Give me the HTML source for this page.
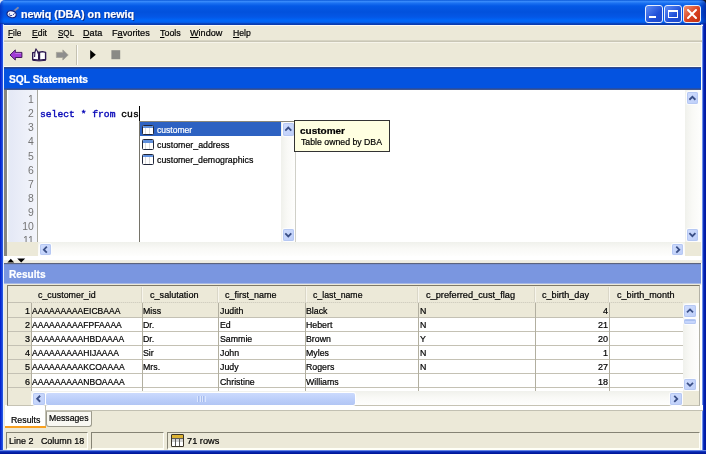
<!DOCTYPE html>
<html>
<head>
<meta charset="utf-8">
<title>newiq (DBA) on newiq</title>
<style>
html,body{margin:0;padding:0;}
body{width:706px;height:454px;overflow:hidden;background:#0a46d8;font-family:"Liberation Sans","DejaVu Sans",sans-serif;font-size:9.5px;color:#000;-webkit-text-stroke:0.22px currentColor;}
div,span{position:absolute;box-sizing:border-box;white-space:nowrap;}
span span{position:static;}
svg{position:absolute;overflow:visible;}
u{text-decoration:underline;}
#win{will-change:transform;left:0;top:0;width:706px;height:454px;overflow:hidden;background:#001aa2;}
#title{left:0;top:0;width:706px;height:24.6px;border-radius:5px 5px 0 0;background:linear-gradient(to bottom,#0a58d8 0,#3a8cfc 1.6px,#1c72f2 3px,#0459e6 6px,#0251dc 12px,#0457e6 17px,#0066f8 20.5px,#0461f0 22.3px,#0a40b6 23.7px,#0a3cb0 24.6px);}
.cb{top:5px;width:18px;height:18px;border:1px solid #e8effd;border-radius:3px;}
#client{left:3.2px;top:24.5px;width:699.2px;height:425.6px;background:#ece9d8;border-left:1px solid #e6eefc;border-right:1.2px solid #fafbf8;}
.hdr{left:4.3px;width:696.9px;}
.sbt{background:linear-gradient(to bottom,#f0f1ec,#f9f9f6 45%,#fefefd);}
.sbv{background:linear-gradient(to right,#f0f1ec,#f9f9f6 45%,#fefefd);}
.btn{background:linear-gradient(135deg,#d0ddfd,#bdcef9);border-radius:2px;box-shadow:0 0 0 1px #fdfdfd,inset 0 0 0 1px #b6c8f3;}
</style>
</head>
<body>
<div id="win">
<div style="left:0;top:0;width:5px;height:5px;background:#dfe8fa"></div><div style="left:701px;top:0;width:5px;height:5px;background:#10142a"></div>
<div id="title"></div>
<div style="left:0;top:0;width:706px;height:24.6px;border-radius:5px 5px 0 0;background:linear-gradient(to right,rgba(0,20,160,.45) 0,rgba(0,20,160,0) 4px,rgba(0,20,160,0) 699px,rgba(0,10,120,.55) 706px)"></div>
<span style="left:20.60px;top:9px;font-size:10px;line-height:11px;height:11px;transform:scaleX(1.0706);transform-origin:0 0;font-weight:bold;color:#fff;text-shadow:1px 1px 0 #10308a;">newiq (DBA) on newiq</span>
<svg style="left:0;top:0" width="30" height="25" viewBox="0 0 30 25"><path d="M13.4 11.8 L18 7.8" stroke="#8088aa" stroke-width="1.8" stroke-linecap="round"/><path d="M11.8 13.6 L14.6 11" stroke="#1c2a7a" stroke-width="1.7"/><ellipse cx="11.6" cy="14.2" rx="4.7" ry="3.4" transform="rotate(14 11.6 14.2)" fill="#f2f4ff" stroke="#14227a" stroke-width="1.2"/><path d="M9.6 13.4 a1.4 1.4 0 1 0 2.4 1.8 M12.8 15 l1.8 -1.6" fill="none" stroke="#2a3a96" stroke-width="1"/></svg>
<div class="cb" style="left:645px;background:linear-gradient(135deg,#5f8df5,#2050d8 60%,#1c48c8)"><div style="left:3px;top:9.8px;width:7px;height:2.4px;background:#fff"></div></div>
<div class="cb" style="left:664px;background:linear-gradient(135deg,#5f8df5,#2050d8 60%,#1c48c8)"><div style="left:3.3px;top:4px;width:9.6px;height:7.6px;border:1px solid #fff;border-top-width:2.4px"></div></div>
<div class="cb" style="left:683px;background:linear-gradient(135deg,#f09070,#d84020 55%,#c03010)"><svg style="left:3px;top:3px" width="10" height="10" viewBox="0 0 10 10"><path d="M1 1 L9 9 M9 1 L1 9" stroke="#fff" stroke-width="2" stroke-linecap="round"/></svg></div>
<div style="left:0;top:24px;width:4px;height:430px;background:linear-gradient(to right,#0019cc 0,#0a2cd2 0.9px,#2454e0 2.5px,#8fb2f6 3.1px,#8fb2f6 4px)"></div>
<div style="left:701px;top:24px;width:5px;height:430px;background:linear-gradient(to right,#7e9cf0 1.4px,#1a40c8 2.1px,#0a2cb8 2.8px,#001aa4 3.8px)"></div>
<div style="left:0;top:449.6px;width:706px;height:4.4px;background:linear-gradient(to bottom,#7e9cf0 0.3px,#1a40c8 1.1px,#0a2cb4 1.9px,#00189c 3.1px)"></div>
<div id="client"></div>
<div style="left:3.5px;top:24.6px;width:699.3px;height:1.2px;background:#fbfaf6"></div>
<span style="left:7.60px;top:27px;font-size:9.5px;line-height:11px;height:11px;transform:scaleX(0.8688);transform-origin:0 0;"><u>F</u>ile</span>
<span style="left:31.70px;top:27px;font-size:9.5px;line-height:11px;height:11px;transform:scaleX(0.9163);transform-origin:0 0;"><u>E</u>dit</span>
<span style="left:57.50px;top:27px;font-size:9.5px;line-height:11px;height:11px;transform:scaleX(0.8469);transform-origin:0 0;"><u>S</u>QL</span>
<span style="left:83.30px;top:27px;font-size:9.5px;line-height:11px;height:11px;transform:scaleX(0.9568);transform-origin:0 0;"><u>D</u>ata</span>
<span style="left:112.00px;top:27px;font-size:9.5px;line-height:11px;height:11px;transform:scaleX(0.9675);transform-origin:0 0;">F<u>a</u>vorites</span>
<span style="left:159.50px;top:27px;font-size:9.5px;line-height:11px;height:11px;transform:scaleX(0.9379);transform-origin:0 0;"><u>T</u>ools</span>
<span style="left:190.20px;top:27px;font-size:9.5px;line-height:11px;height:11px;transform:scaleX(0.9559);transform-origin:0 0;"><u>W</u>indow</span>
<span style="left:232.50px;top:27px;font-size:9.5px;line-height:11px;height:11px;transform:scaleX(0.9110);transform-origin:0 0;"><u>H</u>elp</span>
<div style="left:4px;top:40px;width:698px;height:1px;background:#d6d3c2"></div>
<div style="left:4px;top:41px;width:698px;height:1px;background:#c9c6b6"></div>
<div style="left:4px;top:42px;width:698px;height:1px;background:#f6f4ea"></div>
<svg style="left:0;top:0" width="706" height="454" viewBox="0 0 706 454"><path d="M10 55 L15.3 49.9 L15.3 52.4 L21.9 52.4 L21.9 57.5 L15.3 57.5 L15.3 60 Z" fill="#a23cd6" stroke="#431a5e" stroke-width="1" stroke-linejoin="round"/><path d="M15.3 53.4 L21 53.4" stroke="#c27ae8" stroke-width="1"/><path d="M32.7 52.6 L32.7 59.4 L38.7 60.1 L38.7 52.2 Z M39.5 52.2 L39.5 60.1 L45.6 59.4 L45.6 52.4 L42.5 51.6 Z" fill="#fff" stroke="#2c1850" stroke-width="1.4" stroke-linejoin="round"/><path d="M34.6 57 L34.9 52.5 L35.9 48.9 L37.3 51 L38.4 54" fill="#fff" stroke="#2c1850" stroke-width="1.1" stroke-linejoin="round"/><path d="M32.4 60.3 L38.7 60.9 L39.5 60.9 L45.9 60.3" fill="none" stroke="#2c1850" stroke-width="1"/><path d="M68.2 55 L62.9 49.9 L62.9 52.4 L56.4 52.4 L56.4 57.5 L62.9 57.5 L62.9 60 Z" fill="#8e8e8e" stroke="#a9a79c" stroke-width="1" stroke-linejoin="round"/><path d="M90.2 50 L95.8 54.7 L90.2 59.4 Z" fill="#000"/><rect x="111.4" y="50.2" width="8.8" height="9" fill="#8a8a86"/></svg>
<div style="left:76.2px;top:45px;width:1px;height:20px;background:#c5c2b2"></div><div style="left:77.2px;top:45px;width:1px;height:20px;background:#fdfcf8"></div>
<div style="left:4px;top:65.9px;width:698px;height:1.3px;background:#fcfbf4"></div>
<div class="hdr" style="top:67.1px;height:22.9px;background:linear-gradient(to bottom,#3a508a 0,#1e3f94 1.2px,#0453e0 2px,#0453e0 21px,#2c4c9c 21.7px,#4c5e8c 22.9px)"></div>
<span style="left:8.80px;top:73px;font-size:10.5px;line-height:12px;height:12px;transform:scaleX(0.9763);transform-origin:0 0;font-weight:bold;color:#fff;">SQL Statements</span>
<div style="left:4.2px;top:90px;width:697.2px;height:166.4px;background:#86867e"></div>
<div style="left:6.8px;top:90.3px;width:694.6px;height:165.9px;background:#ece9d8"></div>
<div style="left:6.8px;top:90.3px;width:694.6px;height:151.9px;background:#fff"></div>
<div style="left:6.8px;top:90.3px;width:30.2px;height:151.9px;background:linear-gradient(to right,#fff 0,#fff 0.8px,#e6ecf4 1.6px,#e5e9f6 4px,#f3f5fb 100%)"></div><div style="left:37px;top:90px;width:1px;height:152px;background:#a8a8a0"></div>
<div style="left:5px;top:90px;width:696px;height:152px;overflow:hidden">
<span style="left:22.92px;top:4px;font-size:10.4px;line-height:11px;height:11px;transform:scaleX(1.0000);transform-origin:0 0;color:#747474;-webkit-text-stroke:0;">1</span>
<span style="left:22.92px;top:18px;font-size:10.4px;line-height:11px;height:11px;transform:scaleX(1.0000);transform-origin:0 0;color:#747474;-webkit-text-stroke:0;">2</span>
<span style="left:22.92px;top:32px;font-size:10.4px;line-height:11px;height:11px;transform:scaleX(1.0000);transform-origin:0 0;color:#747474;-webkit-text-stroke:0;">3</span>
<span style="left:22.92px;top:46px;font-size:10.4px;line-height:11px;height:11px;transform:scaleX(1.0000);transform-origin:0 0;color:#747474;-webkit-text-stroke:0;">4</span>
<span style="left:22.92px;top:61px;font-size:10.4px;line-height:11px;height:11px;transform:scaleX(1.0000);transform-origin:0 0;color:#747474;-webkit-text-stroke:0;">5</span>
<span style="left:22.92px;top:75px;font-size:10.4px;line-height:11px;height:11px;transform:scaleX(1.0000);transform-origin:0 0;color:#747474;-webkit-text-stroke:0;">6</span>
<span style="left:22.92px;top:89px;font-size:10.4px;line-height:11px;height:11px;transform:scaleX(1.0000);transform-origin:0 0;color:#747474;-webkit-text-stroke:0;">7</span>
<span style="left:22.92px;top:103px;font-size:10.4px;line-height:11px;height:11px;transform:scaleX(1.0000);transform-origin:0 0;color:#747474;-webkit-text-stroke:0;">8</span>
<span style="left:22.92px;top:117px;font-size:10.4px;line-height:11px;height:11px;transform:scaleX(1.0000);transform-origin:0 0;color:#747474;-webkit-text-stroke:0;">9</span>
<span style="left:17.13px;top:131px;font-size:10.4px;line-height:11px;height:11px;transform:scaleX(1.0000);transform-origin:0 0;color:#747474;-webkit-text-stroke:0;">10</span>
<span style="left:17.90px;top:145px;font-size:10.4px;line-height:11px;height:11px;transform:scaleX(1.0000);transform-origin:0 0;color:#747474;-webkit-text-stroke:0;">11</span>
</div>
<span style="left:39.80px;top:109px;font-size:9.67px;line-height:11px;height:11px;transform:scaleX(1.0016);transform-origin:0 0;color:#0808b8;font-family:'Liberation Mono','DejaVu Sans Mono',monospace;-webkit-text-stroke:0.4px currentColor;">select * from <span style="color:#000">cus</span></span>
<div style="left:139px;top:106px;width:1px;height:15px;background:#000"></div>
<div class="sbv" style="left:685.3px;top:90.3px;width:16.1px;height:151.9px"></div>
<div class="btn" style="left:687px;top:92.3px;width:10.8px;height:11.9px"></div>
<svg style="left:0;top:0" width="1" height="1"><path d="M689.4 99.75 L692.4 96.75 L695.4 99.75" fill="none" stroke="#3a4f86" stroke-width="1.8"/></svg>
<div class="btn" style="left:687px;top:228.6px;width:10.8px;height:12.2px"></div>
<svg style="left:0;top:0" width="1" height="1"><path d="M689.4 233.2 L692.4 236.2 L695.4 233.2" fill="none" stroke="#3a4f86" stroke-width="1.8"/></svg>
<div style="left:139px;top:120.6px;width:156.5px;height:121.6px;background:#fff;border-left:1.4px solid #76746a;border-top:1px solid #8a887a;border-right:1px solid #d0d0c8"></div>
<div style="left:140.3px;top:121.5px;width:141px;height:14.8px;background:#2d62c2"></div>
<div style="left:141.8px;top:124.7px;width:12px;height:10.6px;background:#fff;border:1.2px solid #20263a;border-radius:1.5px;overflow:hidden"><div style="left:0;top:0;width:10px;height:2.2px;background:#5f8fdc"></div><div style="left:2.7px;top:2.2px;width:1px;height:7px;background:#dcdcdc"></div><div style="left:5.9px;top:2.2px;width:1px;height:7px;background:#dcdcdc"></div></div>
<span style="left:157.20px;top:124px;font-size:9.5px;line-height:11px;height:11px;transform:scaleX(0.9010);transform-origin:0 0;color:#fff;">customer</span>
<div style="left:141.8px;top:139.4px;width:12px;height:10.6px;background:#fff;border:1.2px solid #20263a;border-radius:1.5px;overflow:hidden"><div style="left:0;top:0;width:10px;height:2.2px;background:#5f8fdc"></div><div style="left:2.7px;top:2.2px;width:1px;height:7px;background:#dcdcdc"></div><div style="left:5.9px;top:2.2px;width:1px;height:7px;background:#dcdcdc"></div></div>
<span style="left:157.20px;top:139px;font-size:9.5px;line-height:11px;height:11px;transform:scaleX(0.9277);transform-origin:0 0;color:#000;">customer_address</span>
<div style="left:141.8px;top:154.2px;width:12px;height:10.6px;background:#fff;border:1.2px solid #20263a;border-radius:1.5px;overflow:hidden"><div style="left:0;top:0;width:10px;height:2.2px;background:#5f8fdc"></div><div style="left:2.7px;top:2.2px;width:1px;height:7px;background:#dcdcdc"></div><div style="left:5.9px;top:2.2px;width:1px;height:7px;background:#dcdcdc"></div></div>
<span style="left:157.20px;top:154px;font-size:9.5px;line-height:11px;height:11px;transform:scaleX(0.9257);transform-origin:0 0;color:#000;">customer_demographics</span>
<div class="sbv" style="left:281.3px;top:121.6px;width:13.4px;height:120.6px"></div>
<div class="btn" style="left:282.6px;top:122.6px;width:11.4px;height:13px"></div>
<svg style="left:0;top:0" width="1" height="1"><path d="M285.3 130.6 L288.3 127.6 L291.3 130.6" fill="none" stroke="#3a4f86" stroke-width="1.8"/></svg>
<div class="btn" style="left:282.6px;top:228.6px;width:11.4px;height:12.6px"></div>
<svg style="left:0;top:0" width="1" height="1"><path d="M285.3 233.4 L288.3 236.4 L291.3 233.4" fill="none" stroke="#3a4f86" stroke-width="1.8"/></svg>
<div style="left:294px;top:120px;width:96px;height:32px;background:#ffffe1;border:1px solid #333"></div>
<span style="left:300.40px;top:125px;font-size:9.5px;line-height:11px;height:11px;transform:scaleX(1.0523);transform-origin:0 0;font-weight:bold;">customer</span>
<span style="left:300.60px;top:136px;font-size:9.5px;line-height:11px;height:11px;transform:scaleX(0.9184);transform-origin:0 0;">Table owned by DBA</span>
<div class="sbt" style="left:37.8px;top:242.2px;width:647.5px;height:14.2px"></div>
<div class="btn" style="left:39.6px;top:244.3px;width:11.5px;height:10.8px"></div>
<svg style="left:0;top:0" width="1" height="1"><path d="M46.85 246.70000000000002 L43.85 249.70000000000002 L46.85 252.70000000000002" fill="none" stroke="#3a4f86" stroke-width="1.8"/></svg>
<div class="btn" style="left:672.2px;top:244.2px;width:11.2px;height:11px"></div>
<svg style="left:0;top:0" width="1" height="1"><path d="M676.3000000000001 246.7 L679.3000000000001 249.7 L676.3000000000001 252.7" fill="none" stroke="#3a4f86" stroke-width="1.8"/></svg>
<div style="left:4.3px;top:256.4px;width:698.2px;height:6.4px;background:linear-gradient(to bottom,#fff 0,#fff 50%,#f0eee4 62%,#edeade 100%)"></div>
<svg style="left:7px;top:258px" width="20" height="5" viewBox="0 0 20 5"><path d="M0.4 4.4 L3.8 0.8 L7.2 4.4 Z M10.2 0.4 L18.2 0.4 L14.2 4.4 Z" fill="#000"/></svg>
<div class="hdr" style="top:262.6px;height:21.9px;background:linear-gradient(to bottom,#5a6078 0,#5e6682 1px,#7a96e0 1.6px,#7a96e0 20.2px,#e2e5ec 20.9px,#e6e7e6 21.9px)"></div>
<span style="left:8.60px;top:268px;font-size:10.5px;line-height:12px;height:12px;transform:scaleX(0.9623);transform-origin:0 0;font-weight:bold;color:#fff;">Results</span>
<div style="left:5px;top:405px;width:697.5px;height:6px;background:#fff;border-bottom:1px solid #c2c0b2"></div>
<div style="left:698px;top:285px;width:4.4px;height:126px;background:#fff;border-bottom:1px solid #c2c0b2"></div>
<div style="left:7px;top:284.8px;width:692.6px;height:121.2px;background:#ece9d8;border:1px solid;border-top-width:1.6px;border-color:#7d7868 #b2b1a6 #c6c3b4 #807d6e"></div>
<div style="left:31px;top:303px;width:652px;height:88px;background:#fff"></div>
<div style="left:31px;top:303px;width:652px;height:14.5px;background:#ece9d8"></div>
<span style="left:37.50px;top:289px;font-size:9.5px;line-height:11px;height:11px;transform:scaleX(0.9340);transform-origin:0 0;">c_customer_id</span>
<span style="left:149.70px;top:289px;font-size:9.5px;line-height:11px;height:11px;transform:scaleX(0.9566);transform-origin:0 0;">c_salutation</span>
<span style="left:225.40px;top:289px;font-size:9.5px;line-height:11px;height:11px;transform:scaleX(0.9469);transform-origin:0 0;">c_first_name</span>
<span style="left:313.00px;top:289px;font-size:9.5px;line-height:11px;height:11px;transform:scaleX(0.9190);transform-origin:0 0;">c_last_name</span>
<span style="left:425.60px;top:289px;font-size:9.5px;line-height:11px;height:11px;transform:scaleX(0.9685);transform-origin:0 0;">c_preferred_cust_flag</span>
<span style="left:541.70px;top:289px;font-size:9.5px;line-height:11px;height:11px;transform:scaleX(0.9569);transform-origin:0 0;">c_birth_day</span>
<span style="left:616.70px;top:289px;font-size:9.5px;line-height:11px;height:11px;transform:scaleX(0.9551);transform-origin:0 0;">c_birth_month</span>
<span style="left:24.78px;top:305px;font-size:9.5px;line-height:11px;height:11px;transform:scaleX(0.9500);transform-origin:0 0;">1</span>
<span style="left:32.20px;top:305px;font-size:9.5px;line-height:11px;height:11px;transform:scaleX(0.9000);transform-origin:0 0;">AAAAAAAAAEICBAAA</span>
<span style="left:142.90px;top:305px;font-size:9.5px;line-height:11px;height:11px;transform:scaleX(0.9250);transform-origin:0 0;">Miss</span>
<span style="left:220.10px;top:305px;font-size:9.5px;line-height:11px;height:11px;transform:scaleX(0.9250);transform-origin:0 0;">Judith</span>
<span style="left:306.30px;top:305px;font-size:9.5px;line-height:11px;height:11px;transform:scaleX(0.9250);transform-origin:0 0;">Black</span>
<span style="left:420.00px;top:305px;font-size:9.5px;line-height:11px;height:11px;transform:scaleX(0.9250);transform-origin:0 0;">N</span>
<span style="left:603.28px;top:305px;font-size:9.5px;line-height:11px;height:11px;transform:scaleX(0.9500);transform-origin:0 0;">4</span>
<span style="left:24.78px;top:319px;font-size:9.5px;line-height:11px;height:11px;transform:scaleX(0.9500);transform-origin:0 0;">2</span>
<span style="left:32.20px;top:319px;font-size:9.5px;line-height:11px;height:11px;transform:scaleX(0.9000);transform-origin:0 0;">AAAAAAAAAFPFAAAA</span>
<span style="left:142.90px;top:319px;font-size:9.5px;line-height:11px;height:11px;transform:scaleX(0.9250);transform-origin:0 0;">Dr.</span>
<span style="left:220.10px;top:319px;font-size:9.5px;line-height:11px;height:11px;transform:scaleX(0.9250);transform-origin:0 0;">Ed</span>
<span style="left:306.30px;top:319px;font-size:9.5px;line-height:11px;height:11px;transform:scaleX(0.9250);transform-origin:0 0;">Hebert</span>
<span style="left:420.00px;top:319px;font-size:9.5px;line-height:11px;height:11px;transform:scaleX(0.9250);transform-origin:0 0;">N</span>
<span style="left:598.26px;top:319px;font-size:9.5px;line-height:11px;height:11px;transform:scaleX(0.9500);transform-origin:0 0;">21</span>
<span style="left:24.78px;top:333px;font-size:9.5px;line-height:11px;height:11px;transform:scaleX(0.9500);transform-origin:0 0;">3</span>
<span style="left:32.20px;top:333px;font-size:9.5px;line-height:11px;height:11px;transform:scaleX(0.9000);transform-origin:0 0;">AAAAAAAAAHBDAAAA</span>
<span style="left:142.90px;top:333px;font-size:9.5px;line-height:11px;height:11px;transform:scaleX(0.9250);transform-origin:0 0;">Dr.</span>
<span style="left:220.10px;top:333px;font-size:9.5px;line-height:11px;height:11px;transform:scaleX(0.9250);transform-origin:0 0;">Sammie</span>
<span style="left:306.30px;top:333px;font-size:9.5px;line-height:11px;height:11px;transform:scaleX(0.9250);transform-origin:0 0;">Brown</span>
<span style="left:420.00px;top:333px;font-size:9.5px;line-height:11px;height:11px;transform:scaleX(0.9250);transform-origin:0 0;">Y</span>
<span style="left:598.26px;top:333px;font-size:9.5px;line-height:11px;height:11px;transform:scaleX(0.9500);transform-origin:0 0;">20</span>
<span style="left:24.78px;top:347px;font-size:9.5px;line-height:11px;height:11px;transform:scaleX(0.9500);transform-origin:0 0;">4</span>
<span style="left:32.20px;top:347px;font-size:9.5px;line-height:11px;height:11px;transform:scaleX(0.9000);transform-origin:0 0;">AAAAAAAAAHIJAAAA</span>
<span style="left:142.90px;top:347px;font-size:9.5px;line-height:11px;height:11px;transform:scaleX(0.9250);transform-origin:0 0;">Sir</span>
<span style="left:220.10px;top:347px;font-size:9.5px;line-height:11px;height:11px;transform:scaleX(0.9250);transform-origin:0 0;">John</span>
<span style="left:306.30px;top:347px;font-size:9.5px;line-height:11px;height:11px;transform:scaleX(0.9250);transform-origin:0 0;">Myles</span>
<span style="left:420.00px;top:347px;font-size:9.5px;line-height:11px;height:11px;transform:scaleX(0.9250);transform-origin:0 0;">N</span>
<span style="left:603.28px;top:347px;font-size:9.5px;line-height:11px;height:11px;transform:scaleX(0.9500);transform-origin:0 0;">1</span>
<span style="left:24.78px;top:361px;font-size:9.5px;line-height:11px;height:11px;transform:scaleX(0.9500);transform-origin:0 0;">5</span>
<span style="left:32.20px;top:361px;font-size:9.5px;line-height:11px;height:11px;transform:scaleX(0.9000);transform-origin:0 0;">AAAAAAAAAKCOAAAA</span>
<span style="left:142.90px;top:361px;font-size:9.5px;line-height:11px;height:11px;transform:scaleX(0.9250);transform-origin:0 0;">Mrs.</span>
<span style="left:220.10px;top:361px;font-size:9.5px;line-height:11px;height:11px;transform:scaleX(0.9250);transform-origin:0 0;">Judy</span>
<span style="left:306.30px;top:361px;font-size:9.5px;line-height:11px;height:11px;transform:scaleX(0.9250);transform-origin:0 0;">Rogers</span>
<span style="left:420.00px;top:361px;font-size:9.5px;line-height:11px;height:11px;transform:scaleX(0.9250);transform-origin:0 0;">N</span>
<span style="left:598.26px;top:361px;font-size:9.5px;line-height:11px;height:11px;transform:scaleX(0.9500);transform-origin:0 0;">27</span>
<span style="left:24.78px;top:376px;font-size:9.5px;line-height:11px;height:11px;transform:scaleX(0.9500);transform-origin:0 0;">6</span>
<span style="left:32.20px;top:376px;font-size:9.5px;line-height:11px;height:11px;transform:scaleX(0.9000);transform-origin:0 0;">AAAAAAAAANBOAAAA</span>
<span style="left:220.10px;top:376px;font-size:9.5px;line-height:11px;height:11px;transform:scaleX(0.9250);transform-origin:0 0;">Christine</span>
<span style="left:306.30px;top:376px;font-size:9.5px;line-height:11px;height:11px;transform:scaleX(0.9250);transform-origin:0 0;">Williams</span>
<span style="left:598.26px;top:376px;font-size:9.5px;line-height:11px;height:11px;transform:scaleX(0.9500);transform-origin:0 0;">18</span>
<div style="left:8px;top:302.40px;width:675px;height:1px;background:#c4c1b4"></div>
<div style="left:8px;top:316.55px;width:675px;height:1px;background:#c4c1b4"></div>
<div style="left:8px;top:330.70px;width:675px;height:1px;background:#c4c1b4"></div>
<div style="left:8px;top:344.85px;width:675px;height:1px;background:#c4c1b4"></div>
<div style="left:8px;top:359.00px;width:675px;height:1px;background:#c4c1b4"></div>
<div style="left:8px;top:373.15px;width:675px;height:1px;background:#c4c1b4"></div>
<div style="left:8px;top:387.30px;width:675px;height:1px;background:#c4c1b4"></div>
<div style="left:30.5px;top:303px;width:1px;height:88px;background:#b2afa0"></div>
<div style="left:141.9px;top:303px;width:1px;height:88px;background:#b2afa0"></div>
<div style="left:217.6px;top:303px;width:1px;height:88px;background:#b2afa0"></div>
<div style="left:305.2px;top:303px;width:1px;height:88px;background:#b2afa0"></div>
<div style="left:417.6px;top:303px;width:1px;height:88px;background:#b2afa0"></div>
<div style="left:534.5px;top:303px;width:1px;height:88px;background:#b2afa0"></div>
<div style="left:609.1px;top:303px;width:1px;height:88px;background:#b2afa0"></div>
<div style="left:141.2px;top:287px;width:1px;height:15px;background:#dad7c8"></div><div style="left:142.2px;top:287px;width:1px;height:15px;background:#f7f5ec"></div>
<div style="left:216.9px;top:287px;width:1px;height:15px;background:#dad7c8"></div><div style="left:217.9px;top:287px;width:1px;height:15px;background:#f7f5ec"></div>
<div style="left:304.5px;top:287px;width:1px;height:15px;background:#dad7c8"></div><div style="left:305.5px;top:287px;width:1px;height:15px;background:#f7f5ec"></div>
<div style="left:416.9px;top:287px;width:1px;height:15px;background:#dad7c8"></div><div style="left:417.9px;top:287px;width:1px;height:15px;background:#f7f5ec"></div>
<div style="left:533.8px;top:287px;width:1px;height:15px;background:#dad7c8"></div><div style="left:534.8px;top:287px;width:1px;height:15px;background:#f7f5ec"></div>
<div style="left:608.4px;top:287px;width:1px;height:15px;background:#dad7c8"></div><div style="left:609.4px;top:287px;width:1px;height:15px;background:#f7f5ec"></div>
<div style="left:31px;top:301.6px;width:652px;height:1px;background:repeating-linear-gradient(to right,#d2cfc0 0,#d2cfc0 1px,#e2dfd0 1px,#e2dfd0 2px)"></div>
<div class="sbv" style="left:683px;top:303px;width:15.6px;height:88px"></div>
<div class="btn" style="left:684.4px;top:305.3px;width:11.2px;height:11.3px"></div>
<svg style="left:0;top:0" width="1" height="1"><path d="M687.0 312.45 L690.0 309.45 L693.0 312.45" fill="none" stroke="#3a4f86" stroke-width="1.8"/></svg>
<div class="btn" style="left:684.4px;top:318.6px;width:11.2px;height:5px;background:repeating-linear-gradient(to bottom,#c6d6fc 0,#c6d6fc 1px,#a9bff0 1px,#a9bff0 1.7px)"></div>
<div class="btn" style="left:684.4px;top:378.7px;width:11.2px;height:11.2px"></div>
<svg style="left:0;top:0" width="1" height="1"><path d="M687.0 382.8 L690.0 385.8 L693.0 382.8" fill="none" stroke="#3a4f86" stroke-width="1.8"/></svg>
<div class="sbt" style="left:31px;top:391px;width:652px;height:14px"></div>
<div class="btn" style="left:32.7px;top:392.8px;width:11.9px;height:11.9px"></div>
<svg style="left:0;top:0" width="1" height="1"><path d="M40.150000000000006 395.75 L37.150000000000006 398.75 L40.150000000000006 401.75" fill="none" stroke="#3a4f86" stroke-width="1.8"/></svg>
<div style="left:46px;top:392.6px;width:309.4px;height:12.2px;background:linear-gradient(to bottom,#cbdafd,#bccffa 50%,#b2c6f4);border-radius:2px;box-shadow:0 0 0 1px #fff"></div>
<div style="left:196.5px;top:395.5px;width:9px;height:6px;background:repeating-linear-gradient(to right,#dbe6fe 0,#dbe6fe 1px,#a8bdee 1px,#a8bdee 2px,#bccffa 2px,#bccffa 2.6px)"></div>
<div class="btn" style="left:670px;top:392.8px;width:11.5px;height:12.2px"></div>
<svg style="left:0;top:0" width="1" height="1"><path d="M674.25 395.90000000000003 L677.25 398.90000000000003 L674.25 401.90000000000003" fill="none" stroke="#3a4f86" stroke-width="1.8"/></svg>
<div style="left:5px;top:406px;width:40.5px;height:20px;background:#fff;border-right:1px solid #c2c0b2"></div>
<div style="left:5px;top:426px;width:41px;height:2px;background:#f8a020"></div>
<span style="left:10.50px;top:414px;font-size:9.5px;line-height:11px;height:11px;transform:scaleX(0.9281);transform-origin:0 0;">Results</span>
<div style="left:46px;top:411px;width:45.6px;height:15.6px;background:#f9f8f2;border:1px solid #9c9a8c;border-top-color:#bab8aa;border-radius:0 0 3px 3px"></div>
<span style="left:49.20px;top:412px;font-size:9.5px;line-height:11px;height:11px;transform:scaleX(0.9123);transform-origin:0 0;">Messages</span>
<div style="left:6px;top:432.3px;width:82px;height:17.6px;border:1px solid;border-width:1.3px 1.3px 2.6px 1.2px;border-color:#858374 #fffffa #fffff6 #858374"></div>
<div style="left:91px;top:432.3px;width:73px;height:17.6px;border:1px solid;border-width:1.3px 1.3px 2.6px 1.2px;border-color:#858374 #fffffa #fffff6 #858374"></div>
<div style="left:167px;top:432.3px;width:533px;height:17.6px;border:1px solid;border-width:1.3px 1.3px 2.6px 1.2px;border-color:#858374 #fffffa #fffff6 #858374"></div>
<span style="left:9.30px;top:435px;font-size:9.5px;line-height:11px;height:11px;transform:scaleX(0.9430);transform-origin:0 0;">Line 2&nbsp;&nbsp; Column 18</span>
<div style="left:170.9px;top:434px;width:13.6px;height:13.4px;background:#5c5c58;border:1.2px solid #3a3428;border-radius:1px;overflow:hidden"><div style="left:0;top:0;width:12px;height:2.6px;background:#dcb234"></div><div style="left:0.6px;top:4.2px;width:2.7px;height:2.6px;background:#d4d4d4"></div><div style="left:0.6px;top:7.4px;width:2.7px;height:3.4px;background:#fff"></div><div style="left:4.3px;top:4.2px;width:2.7px;height:2.6px;background:#d4d4d4"></div><div style="left:4.3px;top:7.4px;width:2.7px;height:3.4px;background:#fff"></div><div style="left:8.0px;top:4.2px;width:2.7px;height:2.6px;background:#d4d4d4"></div><div style="left:8.0px;top:7.4px;width:2.7px;height:3.4px;background:#fff"></div></div>
<span style="left:186.80px;top:435px;font-size:9.5px;line-height:11px;height:11px;transform:scaleX(0.9710);transform-origin:0 0;">71 rows</span>
</div>
</body>
</html>
